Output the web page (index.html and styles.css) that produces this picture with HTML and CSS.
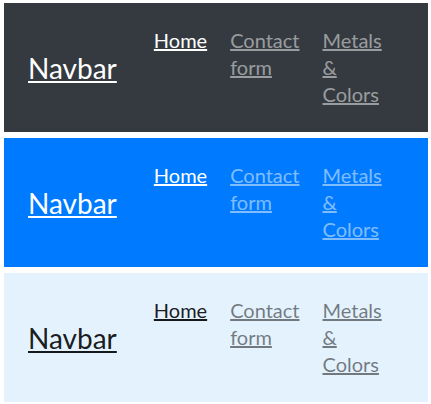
FILE: index.html
```html
<!DOCTYPE html>
<html>
<head>
<meta charset="utf-8">
<link rel="stylesheet" href="styles.css">
</head>
<body>
<div class="stack">
  <nav class="navbar dark">
    <a class="brand" href="#">Navbar</a>
    <ul class="links">
      <li><a class="link active" href="#">Home</a></li>
      <li><a class="link" href="#">Contact form</a></li>
      <li><a class="link" href="#">Metals &amp; Colors</a></li>
    </ul>
  </nav>
  <nav class="navbar primary">
    <a class="brand" href="#">Navbar</a>
    <ul class="links">
      <li><a class="link active" href="#">Home</a></li>
      <li><a class="link" href="#">Contact form</a></li>
      <li><a class="link" href="#">Metals &amp; Colors</a></li>
    </ul>
  </nav>
  <nav class="navbar light">
    <a class="brand" href="#">Navbar</a>
    <ul class="links">
      <li><a class="link active" href="#">Home</a></li>
      <li><a class="link" href="#">Contact form</a></li>
      <li><a class="link" href="#">Metals &amp; Colors</a></li>
    </ul>
  </nav>
</div>
</body>
</html>
```
FILE: styles.css
```css
html, body {
  margin: 0;
  padding: 0;
  background: #ffffff;
}
body {
  font-family: Lato, "Noto Sans", sans-serif;
  padding: 3px 3px 0 4px;
}
.stack {
  display: flex;
  flex-direction: column;
  gap: 6px;
}
.navbar {
  height: 129px;
  box-sizing: border-box;
  display: flex;
  align-items: center;
  padding: 0 24px;
}
.brand {
  font-size: 28px;
  line-height: 36px;
  margin-right: 37px;
  text-decoration: underline;
}
.links {
  list-style: none;
  margin: 0;
  padding: 0;
  display: flex;
  align-items: flex-start;
  gap: 23px;
}
.link {
  display: block;
  width: min-content;
  font-size: 20px;
  line-height: 27px;
  text-decoration: underline;
}
.dark { background: #343a40; }
.dark .brand { color: #ffffff; }
.dark .link { color: rgba(255,255,255,0.5); }
.dark .link.active { color: #ffffff; }
.primary { background: #007bff; }
.primary .brand { color: #ffffff; }
.primary .link { color: rgba(255,255,255,0.5); }
.primary .link.active { color: #ffffff; }
.light { background: #e3f2fd; }
.light .brand { color: rgba(0,0,0,0.9); }
.light .link { color: rgba(0,0,0,0.5); }
.light .link.active { color: rgba(0,0,0,0.9); }
```
